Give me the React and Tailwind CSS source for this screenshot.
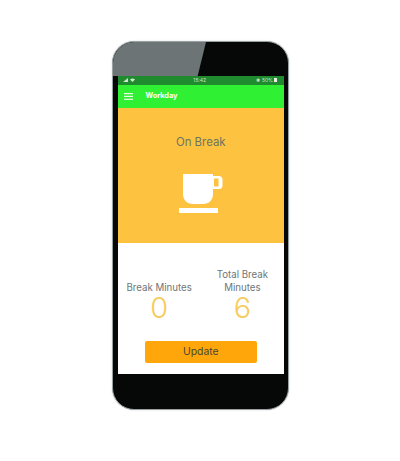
import { useState } from 'react';

function CupIcon() {
  return (
    <svg width="44" height="39" viewBox="0 0 44 39" fill="white" className="block">
      {/* cup body and handle */}
      <path fillRule="evenodd" d="M4 0H34V2H40C42 2 43.500 3.500 43.500 5.500V11.500C43.500 13.500 42 15 40 15H34V20C34 26 30 30 24 30H14C8 30 4 26 4 20ZM35 4.500V12.500H39.500V4.500Z" />
      <rect x="0" y="34" width="39" height="5" />
    </svg>
  );
}

function Stat({ label, value }) {
  return (
    <div className="w-[85px] flex flex-col items-center justify-end text-center">
      <div className="text-[9.700px] leading-[13px] text-[#6f7678]">{label}</div>
      <div className="text-[29px] leading-[27px] font-light text-[#f7cb5a]">{value}</div>
    </div>
  );
}

export default function App() {
  const [breakMinutes] = useState(0);
  const [totalMinutes] = useState(6);

  return (
    <div className="w-[400px] h-[461px] bg-white overflow-hidden font-['Inter',sans-serif] pt-[41px] pl-[112px]">
      {/* Phone body */}
      <div className="relative w-[177px] h-[369px] rounded-[22px] bg-[#060808] border-[1.500px] border-[#99a1a2] shadow-[0_0_2px_#d0d3d4] overflow-hidden pt-[33.500px] pl-[4.500px]">
        {/* Glare */}
        <div className="absolute top-0 left-0 w-[93px] h-[34px] bg-[#6c7475] [clip-path:polygon(0_0,100%_0,91%_100%,0_100%)]"></div>

        {/* Screen */}
        <div className="relative w-[166.500px] h-[298px] flex flex-col bg-white">
          <div className="h-[9px] bg-[#1f8a2e] flex items-center justify-between pl-[5px] pr-[7px] text-[5px] leading-none text-[#cfe6d0]">
            <div className="flex items-end gap-[2px] w-[30px]">
              <svg width="5" height="4" viewBox="0 0 5 4" fill="#cfe6d0"><path d="M0 4L5 0V4Z" /></svg>
              <svg width="5" height="4" viewBox="0 0 5 4" fill="#cfe6d0"><path d="M0 1.500C1.500 0 3.500 0 5 1.500L2.500 4Z" /></svg>
            </div>
            <span>15:42</span>
            <div className="flex items-center gap-[1px] w-[30px] justify-end">
              <span>✱ 50%</span>
              <div className="w-[3px] h-[4px] bg-[#e4f0e4]"></div>
            </div>
          </div>

          <div className="h-[23px] bg-[#2ff032] flex items-center pl-[6px] text-white">
            <svg width="9" height="7" viewBox="0 0 9 7" fill="#eafbe8">
              <rect width="9" height="1.200" />
              <rect y="2.800" width="9" height="1.200" />
              <rect y="5.700" width="9" height="1.200" />
            </svg>
            <span className="ml-[13px] text-[7.300px] font-bold">Workday</span>
          </div>

          <div className="h-[135px] bg-[#fdc340] flex flex-col items-center pt-[27px]">
            <div className="text-[11.400px] leading-[15px] text-[#6f7362]">On Break</div>
            <div className="mt-[24px] ml-[1px]">
              <CupIcon />
            </div>
          </div>

          <div className="flex-1 flex flex-col">
            <div className="flex justify-center h-[68px] mt-[10px]">
              <Stat label="Break Minutes" value={breakMinutes} />
              <Stat label={<>Total Break<br />Minutes</>} value={totalMinutes} />
            </div>
            <div className="flex justify-center mt-[20px]">
              <button className="w-[112px] h-[22px] bg-[#ffa70a] rounded-[2px] text-[10.400px] text-[#4b4636]">Update</button>
            </div>
          </div>
        </div>
      </div>
    </div>
  );
}
